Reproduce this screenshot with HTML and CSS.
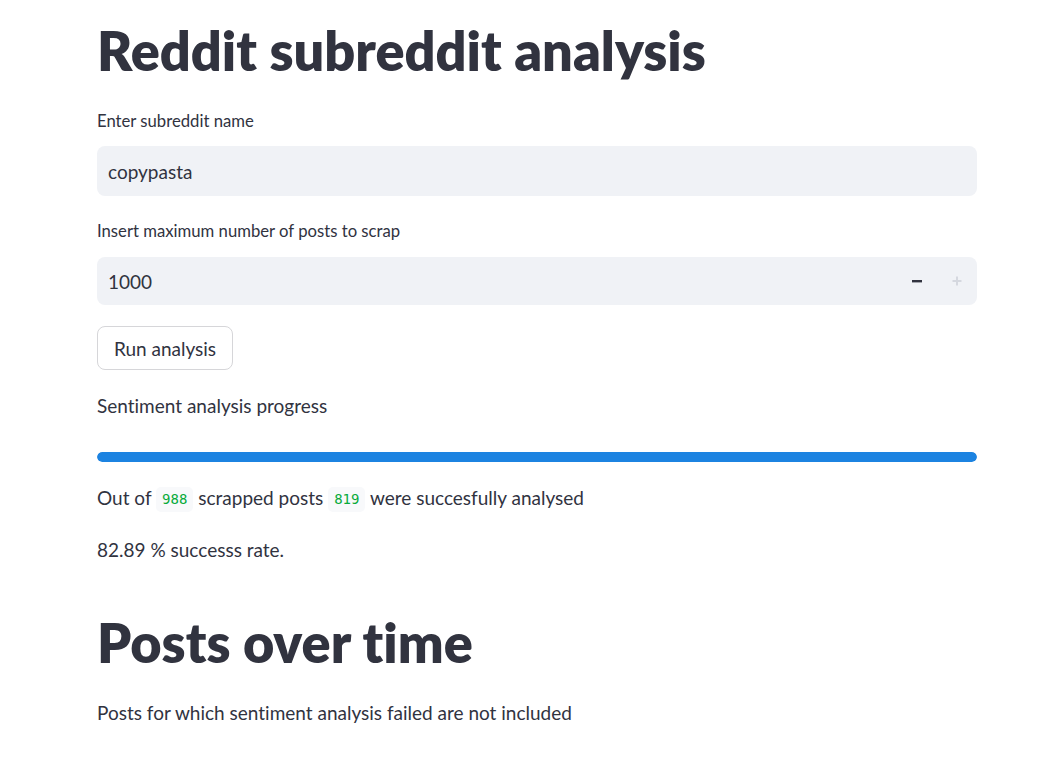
FILE: index.html
```html
<!DOCTYPE html>
<html lang="en">
<head>
<meta charset="utf-8">
<title>Reddit subreddit analysis</title>
<link rel="stylesheet" href="styles.css">
</head>
<body>
<main class="main">
  <h1 class="title">Reddit subreddit analysis</h1>

  <label class="label label-first">Enter subreddit name</label>
  <div class="input text-input">copypasta</div>

  <label class="label label-second">Insert maximum number of posts to scrap</label>
  <div class="input number-input">
    <span class="num-value">1000</span>
    <span class="steppers">
      <span class="step minus"><svg width="12" height="12" viewBox="0 0 12 12"><rect x="1" y="5" width="10" height="2.4" fill="#31333f"/></svg></span>
      <span class="step plus"><svg width="12" height="12" viewBox="0 0 12 12"><rect x="1.5" y="5" width="9" height="2" fill="#d5d8df"/><rect x="5" y="1.5" width="2" height="9" fill="#d5d8df"/></svg></span>
    </span>
  </div>

  <div class="btn-row"><button class="btn">Run analysis</button></div>

  <p class="text progress-label">Sentiment analysis progress</p>
  <div class="progress"><div class="progress-fill" style="width:100%"></div></div>

  <p class="text out-of">Out of <code class="chip">988</code> scrapped posts <code class="chip">819</code> were succesfully analysed</p>
  <p class="text rate">82.89 % successs rate.</p>

  <h1 class="title title-second">Posts over time</h1>
  <p class="text note">Posts for which sentiment analysis failed are not included</p>
</main>
</body>
</html>
```

FILE: styles.css
```css
html, body {
  margin: 0;
  padding: 0;
  background: #ffffff;
}

body {
  font-family: Lato, "Noto Sans", sans-serif;
  color: #31333f;
  font-variant-ligatures: none;
}

.main {
  display: flex;
  flex-direction: column;
  width: 880px;
  padding: 0 70px 0 97px;
}

.title {
  margin: 19px 0 0;
  font-size: 54px;
  line-height: 64px;
  font-weight: 800;
  color: #31333f;
  letter-spacing: 0;
}

.label {
  display: block;
  font-size: 16.7px;
  line-height: 24px;
  height: 24px;
}

.label-first {
  margin-top: 26px;
}

.label-second {
  margin-top: 23px;
}

.input {
  background: #f0f2f6;
  border-radius: 8px;
  box-sizing: border-box;
  font-size: 19px;
  display: flex;
  align-items: center;
}

.text-input {
  margin-top: 13px;
  height: 50px;
  padding-left: 11px;
}

.number-input {
  margin-top: 14px;
  height: 48px;
  padding-left: 11px;
  justify-content: space-between;
}

.steppers {
  display: flex;
  height: 100%;
}

.step {
  width: 40px;
  display: flex;
  align-items: center;
  justify-content: center;
}

.btn-row {
  margin-top: 21px;
  display: flex;
}

.btn {
  height: 44px;
  width: 136px;
  background: #ffffff;
  border: 1px solid #d6d6d9;
  border-radius: 8px;
  font-family: inherit;
  font-size: 19px;
  color: #31333f;
  padding: 0;
}

.text {
  margin: 0;
  font-size: 19px;
  line-height: 28px;
  height: 28px;
}

.progress-label {
  margin-top: 22px;
}

.progress {
  margin-top: 32px;
  height: 10px;
  background: #f0f2f6;
  border-radius: 5px;
  overflow: hidden;
}

.progress-fill {
  height: 100%;
  background: #1c83e1;
  border-radius: 5px;
}

.out-of {
  margin-top: 22px;
}

.chip {
  display: inline-block;
  font-family: "DejaVu Sans Mono", "Liberation Mono", monospace;
  font-size: 14px;
  line-height: 25px;
  height: 25px;
  padding: 0 6px;
  background: #f8f9fb;
  color: #09ab3b;
  border-radius: 5px;
  vertical-align: 1px;
}

.rate {
  margin-top: 24px;
}

.title-second {
  margin-top: 47px;
}

.note {
  margin-top: 24px;
}
```
